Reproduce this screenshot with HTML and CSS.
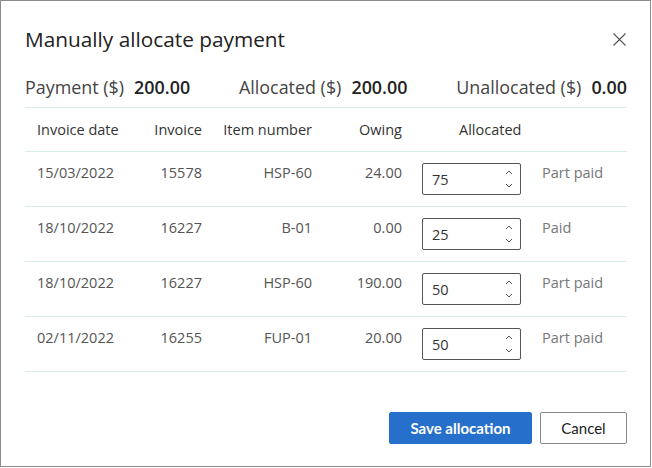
FILE: index.html
```html
<!DOCTYPE html>
<html lang="en">
<head>
<meta charset="utf-8">
<title>Manually allocate payment</title>
<link rel="stylesheet" href="styles.css">
</head>
<body>
<div class="dialog">
  <div class="dialog-header">
    <h1 class="title">Manually allocate payment</h1>
    <button class="close" aria-label="Close">
      <svg width="13" height="13" viewBox="0 0 13 13"><path d="M0.5 0.5 L12.5 12.5 M12.5 0.5 L0.5 12.5" stroke="#555" stroke-width="1.1" fill="none"/></svg>
    </button>
  </div>
  <div class="summary">
    <div class="sum-item"><span class="sum-label">Payment ($)</span><span class="sum-value">200.00</span></div>
    <div class="sum-item"><span class="sum-label">Allocated ($)</span><span class="sum-value">200.00</span></div>
    <div class="sum-item"><span class="sum-label">Unallocated ($)</span><span class="sum-value">0.00</span></div>
  </div>
  <div class="table">
    <div class="row head">
      <div class="c-date">Invoice date</div>
      <div class="c-inv">Invoice</div>
      <div class="c-item">Item number</div>
      <div class="c-owing">Owing</div>
      <div class="c-alloc-h">Allocated</div>
      <div class="c-status"></div>
    </div>
    <div class="row">
      <div class="c-date">15/03/2022</div>
      <div class="c-inv">15578</div>
      <div class="c-item">HSP-60</div>
      <div class="c-owing">24.00</div>
      <div class="c-alloc"><div class="num"><span class="num-val">75</span><span class="spin"><svg width="8" height="20" viewBox="0 0 8 20"><path d="M1 5 L4 2 L7 5 M1 15 L4 18 L7 15" stroke="#555" stroke-width="1" fill="none"/></svg></span></div></div>
      <div class="c-status">Part paid</div>
    </div>
    <div class="row">
      <div class="c-date">18/10/2022</div>
      <div class="c-inv">16227</div>
      <div class="c-item">B-01</div>
      <div class="c-owing">0.00</div>
      <div class="c-alloc"><div class="num"><span class="num-val">25</span><span class="spin"><svg width="8" height="20" viewBox="0 0 8 20"><path d="M1 5 L4 2 L7 5 M1 15 L4 18 L7 15" stroke="#555" stroke-width="1" fill="none"/></svg></span></div></div>
      <div class="c-status">Paid</div>
    </div>
    <div class="row">
      <div class="c-date">18/10/2022</div>
      <div class="c-inv">16227</div>
      <div class="c-item">HSP-60</div>
      <div class="c-owing">190.00</div>
      <div class="c-alloc"><div class="num"><span class="num-val">50</span><span class="spin"><svg width="8" height="20" viewBox="0 0 8 20"><path d="M1 5 L4 2 L7 5 M1 15 L4 18 L7 15" stroke="#555" stroke-width="1" fill="none"/></svg></span></div></div>
      <div class="c-status">Part paid</div>
    </div>
    <div class="row">
      <div class="c-date">02/11/2022</div>
      <div class="c-inv">16255</div>
      <div class="c-item">FUP-01</div>
      <div class="c-owing">20.00</div>
      <div class="c-alloc"><div class="num"><span class="num-val">50</span><span class="spin"><svg width="8" height="20" viewBox="0 0 8 20"><path d="M1 5 L4 2 L7 5 M1 15 L4 18 L7 15" stroke="#555" stroke-width="1" fill="none"/></svg></span></div></div>
      <div class="c-status">Part paid</div>
    </div>
  </div>
  <div class="footer">
    <button class="btn btn-primary">Save allocation</button>
    <button class="btn btn-secondary">Cancel</button>
  </div>
</div>
</body>
</html>
```
FILE: styles.css
```css
* { box-sizing: border-box; }
html, body { margin: 0; padding: 0; background: #ffffff; }
body {
  font-family: "Open Sans", "Liberation Sans", sans-serif;
  color: #333;
}
.dialog {
  width: 651px;
  height: 467px;
  border: 1px solid #8c8c8c;
  background: #fff;
  padding: 24px 23px 0 24px;
  display: flex;
  flex-direction: column;
}
.dialog-header {
  display: flex;
  align-items: center;
  justify-content: space-between;
  height: 28px;
}
.title {
  margin: 0;
  font-size: 20.8px;
  line-height: 28px;
  font-weight: 500;
  color: #222;
}
.close {
  border: 0;
  background: none;
  padding: 0;
  margin-right: 1px;
  width: 13px;
  height: 13px;
  display: flex;
}
.summary {
  display: flex;
  justify-content: space-between;
  margin-top: 22px;
  padding-bottom: 8px;
  border-bottom: 1px solid #d9ecec;
  font-size: 17.9px;
  line-height: 24px;
}
.sum-item { display: flex; gap: 10px; }
.sum-label { color: #444; }
.sum-value { color: #222; font-weight: 600; }
.table { font-size: 14.5px; line-height: 20px; }
.row {
  display: grid;
  grid-template-columns: 112px 65px 110px 90px 140px 1fr;
  align-items: start;
  height: 55px;
  padding-top: 11px;
  border-bottom: 1px solid #d9ecec;
  color: #555;
}
.row.head {
  height: 44px;
  padding-top: 0;
  align-items: center;
  color: #333;
}
.c-date { padding-left: 12px; }
.c-inv, .c-item, .c-owing { text-align: right; }
.c-alloc-h { padding-left: 57px; }
.c-alloc { padding-left: 20px; }
.c-status { color: #777; }
.num {
  width: 99px;
  height: 32px;
  border: 1px solid #555;
  border-radius: 2px;
  display: flex;
  align-items: center;
  padding-left: 9px;
  padding-right: 7px;
}
.num-val { flex: 1; color: #333; padding-top: 1px; }
.spin { display: flex; }
.footer {
  display: flex;
  justify-content: flex-end;
  gap: 8px;
  margin-top: 40px;
}
.btn {
  height: 32px;
  font-family: "Lato", "Open Sans", sans-serif;
  font-size: 15px;
  border-radius: 2px;
  cursor: pointer;
}
.btn-primary {
  width: 143px;
  background: #2670cc;
  color: #fff;
  border: 1px solid #2670cc;
  font-weight: 700;
}
.btn-secondary {
  width: 87px;
  background: #fff;
  color: #222;
  border: 1px solid #8a8a8a;
}
```
